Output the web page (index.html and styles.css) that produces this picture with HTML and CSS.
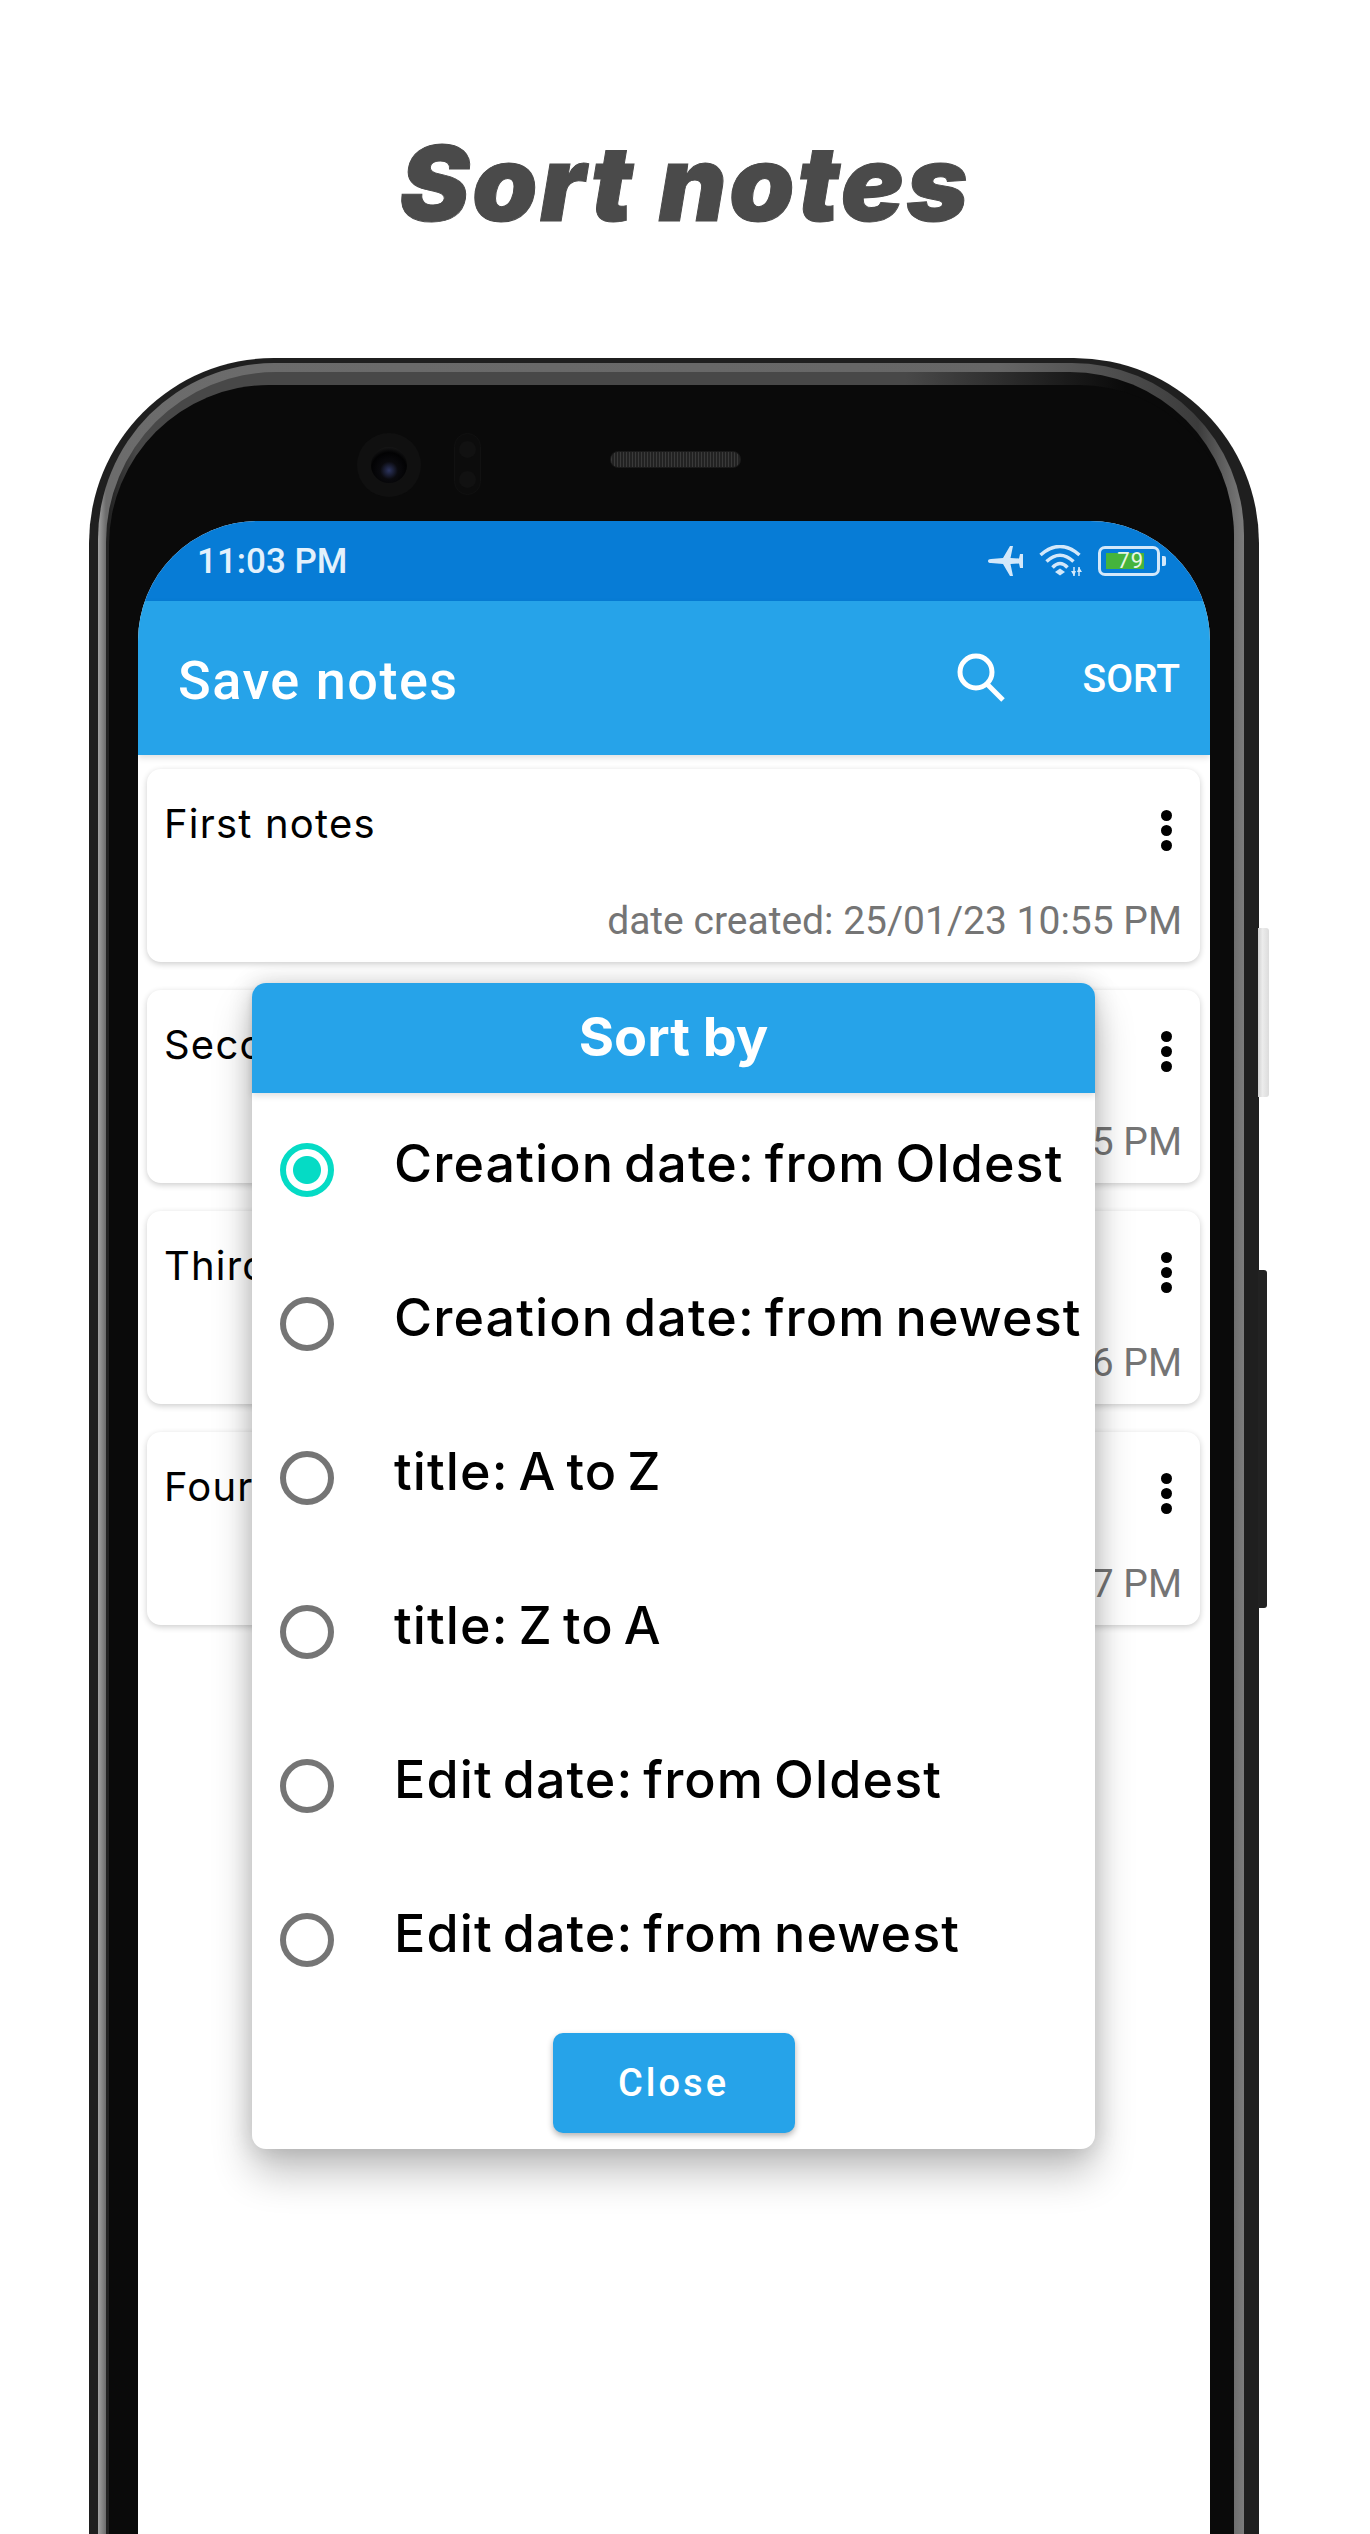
FILE: index.html
```html
<!DOCTYPE html>
<html lang="en">
<head>
    <meta charset="UTF-8">
    <meta name="viewport" content="width=device-width, initial-scale=1.0">
    <title>Sort notes</title>
    <link rel="stylesheet" href="styles.css">
</head>
<body>
    <h1 class="headline">Sort notes</h1>

    <div class="device">
        <span class="side-btn side-btn-light"></span>
        <span class="side-btn side-btn-dark"></span>
        <div class="shell">
            <div class="rim">
                <div class="bevel">
                    <div class="face">
                        <div class="sensors">
                            <span class="camera"><span class="lens"></span></span>
                            <span class="proximity"><i></i><i></i></span>
                            <span class="speaker"></span>
                        </div>

                        <div class="screen">
                            <div class="statusbar">
                                <span class="clock">11:03 PM</span>
                                <div class="status-icons">
                                    <svg class="icon-plane" width="36" height="30" viewBox="0 0 36 30">
                                        <path d="M0 15 Q0 13 3 13 L15 12 L22 0 L25 0 L22.500 12 L31 12.500 L32 8 L35 8 L35 22 L32 22 L31 17.500 L22.500 18 L25 30 L22 30 L15 18 L3 17 Q0 17 0 15Z" fill="#d3e8fa"/>
                                    </svg>
                                    <svg class="icon-wifi" width="44" height="32" viewBox="0 0 44 32" fill="none" stroke="#d3e8fa" stroke-width="3.500">
                                        <path d="M1.500 10 Q21 -7 40.500 10"/>
                                        <path d="M7.500 16.500 Q21 4 34.500 16.500"/>
                                        <path d="M13.500 22.500 Q21 14.500 28.500 22.500"/>
                                        <path d="M16 27 L21 23.500 L26 27 L21 30.500Z" fill="#d3e8fa" stroke="none"/>
                                        <path d="M35 22 V31 M40 22 V31" stroke-width="1.500"/>
                                        <path d="M32 26 L35 31 L37 26Z M38 27 L40 22 L43 27Z" fill="#d3e8fa" stroke="none"/>
                                    </svg>
                                    <div class="battery">
                                        <div class="battery-body"><span class="battery-level">79</span></div>
                                        <span class="battery-nub"></span>
                                    </div>
                                </div>
                            </div>

                            <div class="appbar">
                                <span class="appbar-title">Save notes</span>
                                <svg class="icon-search" width="50" height="50" viewBox="0 0 50 50" fill="none" stroke="#fff" stroke-width="5">
                                    <circle cx="19" cy="19" r="16"/>
                                    <path d="M30 31 L46 47"/>
                                </svg>
                                <span class="appbar-action">SORT</span>
                            </div>

                            <div class="notes">
                                <div class="note">
                                    <div class="note-top">
                                        <span class="note-title">First notes</span>
                                        <span class="kebab"><i></i><i></i><i></i></span>
                                    </div>
                                    <div class="note-date">date created: 25/01/23 10:55 PM</div>
                                </div>
                                <div class="note">
                                    <div class="note-top">
                                        <span class="note-title">Second notes</span>
                                        <span class="kebab"><i></i><i></i><i></i></span>
                                    </div>
                                    <div class="note-date">date created: 25/01/23 10:55 PM</div>
                                </div>
                                <div class="note">
                                    <div class="note-top">
                                        <span class="note-title">Third notes</span>
                                        <span class="kebab"><i></i><i></i><i></i></span>
                                    </div>
                                    <div class="note-date">date created: 25/01/23 10:56 PM</div>
                                </div>
                                <div class="note">
                                    <div class="note-top">
                                        <span class="note-title">Fourth notes</span>
                                        <span class="kebab"><i></i><i></i><i></i></span>
                                    </div>
                                    <div class="note-date">date created: 25/01/23 10:57 PM</div>
                                </div>
                            </div>

                            <div class="dialog">
                                <div class="dialog-head">Sort by</div>
                                <div class="option">
                                    <span class="radio radio-on"></span>
                                    <span class="option-label">Creation date: from Oldest</span>
                                </div>
                                <div class="option">
                                    <span class="radio"></span>
                                    <span class="option-label">Creation date: from newest</span>
                                </div>
                                <div class="option">
                                    <span class="radio"></span>
                                    <span class="option-label">title: A to Z</span>
                                </div>
                                <div class="option">
                                    <span class="radio"></span>
                                    <span class="option-label">title: Z to A</span>
                                </div>
                                <div class="option">
                                    <span class="radio"></span>
                                    <span class="option-label">Edit date: from Oldest</span>
                                </div>
                                <div class="option">
                                    <span class="radio"></span>
                                    <span class="option-label">Edit date: from newest</span>
                                </div>
                                <div class="dialog-foot">
                                    <button class="close-btn" type="button">Close</button>
                                </div>
                            </div>
                        </div>
                    </div>
                </div>
            </div>
        </div>
    </div>
</body>
</html>
```

FILE: styles.css
```css
html, body {
    height: 100%;
}
body {
    margin: 0;
    background: #fff;
    overflow: hidden;
    font-family: "Roboto", sans-serif;
}
.headline {
    margin: 0;
    padding-top: 123px;
    height: 235px;
    line-height: 120px;
    text-align: center;
    font-family: "Inter", sans-serif;
    font-size: 105px;
    font-weight: 900;
    font-style: italic;
    letter-spacing: 2.500px;
    color: #4a4a4a;
    -webkit-text-stroke: 1px #4a4a4a;
}

/* phone frame */
.device {
    position: relative;
    width: 1170px;
    height: 2176px;
    margin-left: 89px;
}
.shell {
    height: 100%;
    box-sizing: border-box;
    padding: 5px 15px 0 9px;
    background: #1f1f1f;
    border-radius: 185px 185px 0 0;
}
.rim {
    height: 100%;
    box-sizing: border-box;
    padding: 9px 10px 0 8px;
    background: linear-gradient(90deg, #a2a2a2 0, #6c6c6c 8px, #666 900px, #3c3c3c 1100px, #7c7c7c 1146px);
    border-radius: 176px 172px 0 0;
}
.bevel {
    height: 100%;
    box-sizing: border-box;
    padding: 13px 0 0 3px;
    background: linear-gradient(90deg, #222 0, #222 3px, #484848 30px, #484848 800px, #0a0a0a 1020px);
    border-radius: 170px 164px 0 0;
}
.face {
    height: 100%;
    box-sizing: border-box;
    padding: 0 24px 0 29px;
    background: #0a0a0a;
    border-radius: 160px 156px 0 0;
}
.side-btn {
    position: absolute;
}
.side-btn-light {
    top: 570px;
    right: -10px;
    width: 11px;
    height: 169px;
    background: linear-gradient(90deg, #cfcfcf, #ececec 40%, #dcdcdc);
    border-radius: 0 3px 3px 0;
}
.side-btn-dark {
    top: 912px;
    right: -8px;
    width: 9px;
    height: 338px;
    background: #222;
    border-radius: 0 3px 3px 0;
}

/* camera + speaker */
.sensors {
    display: flex;
    align-items: flex-start;
    height: 136px;
}
.camera {
    display: flex;
    align-items: center;
    justify-content: center;
    width: 64px;
    height: 64px;
    margin: 48px 0 0 219px;
    background: #101010;
    border-radius: 50%;
}
.lens {
    width: 36px;
    height: 36px;
    background: radial-gradient(circle at 50% 65%, #2d3560 0, #0a0a0e 30%, #020203 60%, #2b2b2b 100%);
    border-radius: 50%;
}
.proximity {
    display: flex;
    flex-direction: column;
    align-items: center;
    justify-content: space-around;
    width: 27px;
    height: 62px;
    margin: 48px 0 0 33px;
    background: #0c0c0c;
    border: 1px solid #111;
    box-sizing: border-box;
    border-radius: 14px;
}
.proximity i {
    width: 17px;
    height: 17px;
    background: #111;
    border-radius: 50%;
}
.speaker {
    width: 131px;
    height: 17px;
    margin: 66px 0 0 129px;
    background: repeating-linear-gradient(90deg, #3a3a3a 0, #3a3a3a 1px, #222 1px, #222 3px);
    border: 1px solid #1a1a1a;
    box-sizing: border-box;
    border-radius: 8px;
}

/* app screen */
.screen {
    position: relative;
    height: 2100px;
    background: #fff;
    border-radius: 120px 120px 0 0;
    overflow: hidden;
}
.statusbar {
    display: flex;
    align-items: center;
    justify-content: space-between;
    height: 80px;
    box-sizing: border-box;
    padding: 0 44px 0 59px;
    background: #077cd6;
}
.clock {
    font-size: 35px;
    font-weight: 500;
    color: #e3f1fc;
}
.status-icons {
    display: flex;
    align-items: center;
    gap: 15px;
}
.battery {
    display: flex;
    align-items: center;
    gap: 2px;
}
.battery-body {
    width: 62px;
    height: 30px;
    box-sizing: border-box;
    padding: 4px 0 0 5px;
    border: 3px solid #d3e8fa;
    border-radius: 7px;
}
.battery-level {
    display: block;
    width: 38px;
    height: 16px;
    background: #45b43c;
    color: #e8f7e4;
    font-size: 22px;
    line-height: 16px;
    letter-spacing: 1px;
    text-align: right;
}
.battery-nub {
    width: 4px;
    height: 10px;
    background: #d3e8fa;
    border-radius: 0 2px 2px 0;
}
.appbar {
    position: relative;
    display: flex;
    align-items: center;
    height: 154px;
    box-sizing: border-box;
    padding: 0 30px 0 40px;
    background: #26a3e9;
    color: #fff;
    box-shadow: 0 3px 6px rgba(0, 0, 0, 0.12);
}
.appbar-title {
    flex: 1;
    margin-top: 5px;
    font-size: 54px;
    font-weight: 500;
    letter-spacing: 1.500px;
}
.icon-search {
    margin-right: 76px;
}
.appbar-action {
    margin-top: 2px;
    font-size: 39px;
    font-weight: 500;
}

/* notes list */
.notes {
    display: flex;
    flex-direction: column;
    gap: 28px;
    padding: 14px 10px 0 9px;
}
.note {
    display: flex;
    flex-direction: column;
    justify-content: space-between;
    height: 193px;
    box-sizing: border-box;
    padding: 32px 18px 19px 17px;
    background: #fff;
    border-radius: 14px;
    box-shadow: 0 2px 6px rgba(0, 0, 0, 0.2);
}
.note-top {
    display: flex;
    justify-content: space-between;
}
.note-title {
    font-family: "Inter", sans-serif;
    font-size: 40px;
    line-height: 46px;
    letter-spacing: 1.200px;
    color: #000;
}
.kebab {
    display: flex;
    flex-direction: column;
    gap: 4px;
    margin: 9px 10px 0 0;
}
.kebab i {
    width: 11px;
    height: 11px;
    background: #000;
    border-radius: 50%;
}
.note-date {
    font-size: 39px;
    line-height: 44px;
    text-align: right;
    color: #757575;
}

/* sort dialog */
.dialog {
    position: absolute;
    top: 462px;
    left: 114px;
    width: 843px;
    padding-bottom: 16px;
    background: #fff;
    border-radius: 14px;
    box-shadow: 0 24px 40px rgba(0, 0, 0, 0.24), 0 0 24px rgba(0, 0, 0, 0.16);
}
.dialog-head {
    height: 110px;
    line-height: 108px;
    text-align: center;
    background: #26a3e9;
    color: #fff;
    font-family: "Inter", sans-serif;
    font-size: 54px;
    font-weight: 700;
    border-radius: 14px 14px 0 0;
    box-shadow: 0 3px 6px rgba(0, 0, 0, 0.12);
}
.option {
    display: flex;
    align-items: center;
    height: 154px;
    padding-left: 28px;
}
.radio {
    flex: none;
    width: 54px;
    height: 54px;
    box-sizing: border-box;
    border: 6px solid #757575;
    border-radius: 50%;
}
.radio-on {
    border-color: #05dbc5;
    background: radial-gradient(circle, #05dbc5 0, #05dbc5 13.500px, #fff 14.500px);
}
.option-label {
    margin: 0 0 13px 60px;
    font-family: "Inter", sans-serif;
    font-size: 52px;
    font-weight: 500;
    letter-spacing: 1.100px;
    word-spacing: -5px;
    white-space: nowrap;
    color: #000;
}
.dialog-foot {
    display: flex;
    justify-content: center;
    margin-top: 16px;
}
.close-btn {
    width: 242px;
    height: 100px;
    border: none;
    border-radius: 10px;
    background: #26a3e9;
    color: #fff;
    font-family: "Roboto", sans-serif;
    font-size: 38px;
    font-weight: 500;
    letter-spacing: 3px;
    box-shadow: 0 3px 6px rgba(0, 0, 0, 0.3);
}
```
